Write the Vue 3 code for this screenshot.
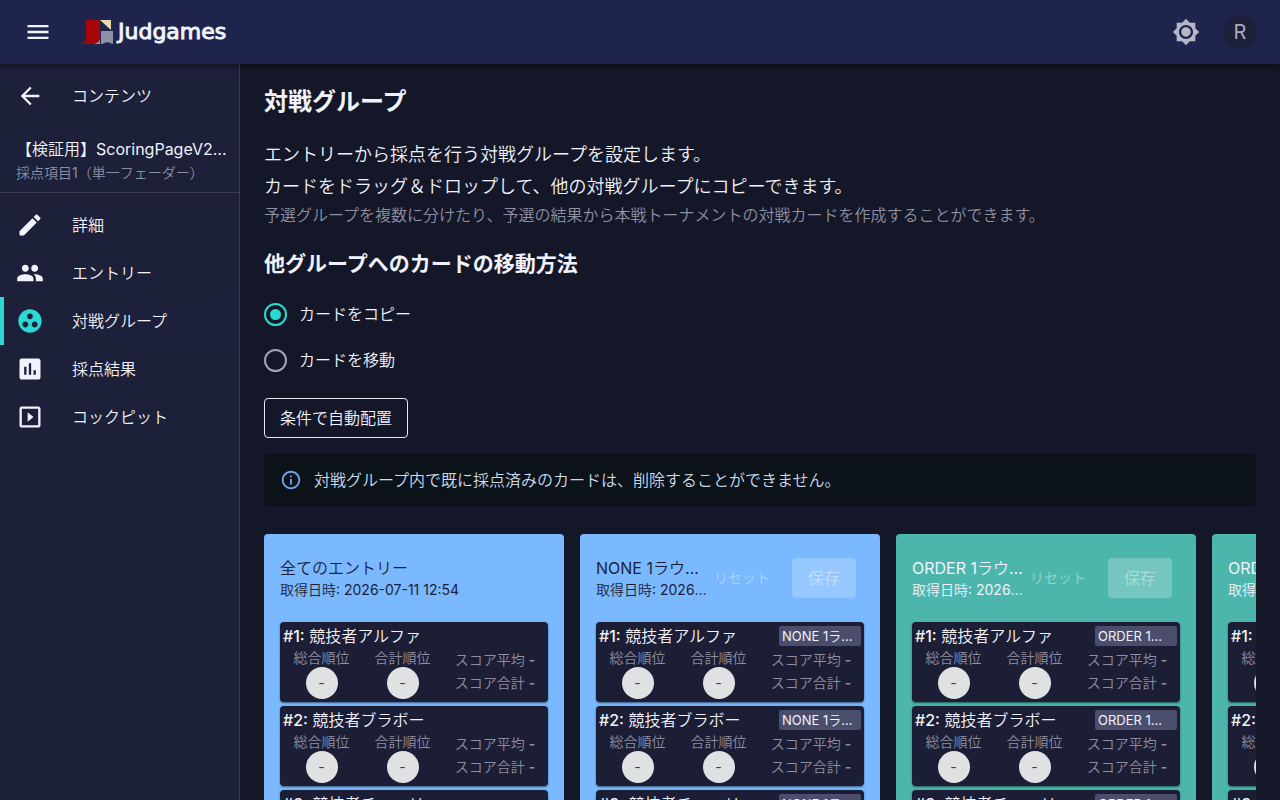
<script setup>
import { ref } from 'vue'

const moveMode = ref('copy')

const navItems = [
  {
    label: '詳細',
    path: 'M3 17.25V21h3.75L17.81 9.94l-3.75-3.75L3 17.25zM20.71 7.04c.39-.39.39-1.02 0-1.41l-2.34-2.34c-.39-.39-1.02-.39-1.41 0l-1.83 1.83 3.75 3.75 1.83-1.83z',
  },
  {
    label: 'エントリー',
    path: 'M16 11c1.66 0 2.99-1.34 2.99-3S17.66 5 16 5c-1.66 0-3 1.34-3 3s1.34 3 3 3zm-8 0c1.66 0 2.99-1.34 2.99-3S9.66 5 8 5C6.34 5 5 6.34 5 8s1.34 3 3 3zm0 2c-2.33 0-7 1.17-7 3.5V19h14v-2.5c0-2.33-4.67-3.5-7-3.5zm8 0c-.29 0-.62.02-.97.05 1.16.84 1.97 1.97 1.97 3.45V19h6v-2.5c0-2.33-4.67-3.5-7-3.5z',
  },
  {
    label: '対戦グループ',
    active: true,
    path: 'M12 2C6.48 2 2 6.48 2 12s4.48 10 10 10 10-4.48 10-10S17.52 2 12 2zM8 17.5c-1.38 0-2.5-1.12-2.5-2.5s1.12-2.5 2.5-2.5 2.5 1.12 2.5 2.5-1.12 2.5-2.5 2.5zM9.5 8c0-1.38 1.12-2.5 2.5-2.5s2.5 1.12 2.5 2.5-1.12 2.5-2.5 2.5S9.5 9.38 9.5 8zm6.5 9.5c-1.38 0-2.5-1.12-2.5-2.5s1.12-2.5 2.5-2.5 2.5 1.12 2.5 2.5-1.12 2.5-2.5 2.5z',
  },
  {
    label: '採点結果',
    path: 'M19 3H5c-1.1 0-2 .9-2 2v14c0 1.1.9 2 2 2h14c1.1 0 2-.9 2-2V5c0-1.1-.9-2-2-2zM9 17H7v-7h2v7zm4 0h-2V7h2v10zm4 0h-2v-4h2v4z',
  },
  {
    label: 'コックピット',
    path: 'M10 8v8l5-4-5-4zm9-5H5c-1.1 0-2 .9-2 2v14c0 1.1.9 2 2 2h14c1.1 0 2-.9 2-2V5c0-1.1-.9-2-2-2zm0 16H5V5h14v14z',
  },
]

const players = ['競技者アルファ', '競技者ブラボー', '競技者チャーリー']

const groups = [
  { name: '全てのエントリー', tone: 'blue', editable: false },
  { name: 'NONE 1ラウンド', tone: 'blue', editable: true },
  { name: 'ORDER 1ラウンド', tone: 'teal', editable: true },
  { name: 'ORDER 2ラウンド', tone: 'teal', editable: true },
]
</script>

<template>
  <div class="app">
    <header class="app-bar">
      <button class="icon-button" type="button" aria-label="メニュー">
        <svg class="icon" viewBox="0 0 24 24"><path d="M3 18h18v-2H3v2zm0-5h18v-2H3v2zm0-7v2h18V6H3z" /></svg>
      </button>
      <a class="brand" href="#">
        <svg class="brand-mark" viewBox="0 0 34 26" aria-hidden="true">
          <path fill="#e8d8b0" d="M20 1h11v10z" />
          <path fill="#8f91a8" d="M21 12h12v13l-6-2-5 2h-1z" />
          <path fill="#8f91a8" d="M20 18v7h-9z" />
          <path fill="#a80508" d="M6 1h14v17c0 4-2 6-6 7H0v-1c4 0 6-1 6-4z" />
        </svg>
        <span class="brand-name">Judgames</span>
      </a>
      <div class="app-bar-actions">
        <button class="icon-button muted" type="button" aria-label="テーマ">
          <svg class="icon" viewBox="0 0 24 24"><path d="M20 8.69V4h-4.69L12 .69 8.69 4H4v4.69L.69 12 4 15.31V20h4.69L12 23.31 15.31 20H20v-4.69L23.31 12 20 8.69zM12 18c-3.31 0-6-2.69-6-6s2.69-6 6-6 6 2.69 6 6-2.69 6-6 6zm0-10c-2.21 0-4 1.79-4 4s1.79 4 4 4 4-1.79 4-4-1.79-4-4-4z" /></svg>
        </button>
        <button class="avatar" type="button">R</button>
      </div>
    </header>

    <div class="body">
      <nav class="sidebar">
        <a class="nav-item back" href="#">
          <svg class="icon" viewBox="0 0 24 24"><path d="M20 11H7.83l5.59-5.59L12 4l-8 8 8 8 1.41-1.41L7.83 13H20v-2z" /></svg>
          <span>コンテンツ</span>
        </a>
        <div class="project">
          <div class="project-name">【検証用】ScoringPageV2 テスト</div>
          <div class="project-item">採点項目1（単一フェーダー）</div>
        </div>
        <ul class="nav-list">
          <li v-for="item in navItems" :key="item.label">
            <a class="nav-item" :class="{ active: item.active }" href="#">
              <svg class="icon" viewBox="0 0 24 24"><path :d="item.path" /></svg>
              <span>{{ item.label }}</span>
            </a>
          </li>
        </ul>
      </nav>

      <main class="content">
        <h1>対戦グループ</h1>
        <p class="lead">エントリーから採点を行う対戦グループを設定します。</p>
        <p class="lead">カードをドラッグ＆ドロップして、他の対戦グループにコピーできます。</p>
        <p class="note">予選グループを複数に分けたり、予選の結果から本戦トーナメントの対戦カードを作成することができます。</p>

        <h2>他グループへのカードの移動方法</h2>
        <div class="radio-group">
          <label class="radio">
            <input v-model="moveMode" type="radio" name="move-mode" value="copy">
            <span>カードをコピー</span>
          </label>
          <label class="radio">
            <input v-model="moveMode" type="radio" name="move-mode" value="move">
            <span>カードを移動</span>
          </label>
        </div>
        <button class="outlined-button" type="button">条件で自動配置</button>

        <div class="alert" role="status">
          <svg class="alert-icon" viewBox="0 0 24 24"><path d="M11 7h2v2h-2zm0 4h2v6h-2zm1-9C6.48 2 2 6.48 2 12s4.48 10 10 10 10-4.48 10-10S17.52 2 12 2zm0 18c-4.41 0-8-3.59-8-8s3.59-8 8-8 8 3.59 8 8-3.59 8-8 8z" /></svg>
          <span>対戦グループ内で既に採点済みのカードは、削除することができません。</span>
        </div>

        <div class="board">
          <section v-for="group in groups" :key="group.name" class="group" :class="group.tone">
            <div class="group-header">
              <div class="group-title">
                <div class="group-name">{{ group.name }}</div>
                <div class="group-date">取得日時: 2026-07-11 12:54</div>
              </div>
              <template v-if="group.editable">
                <button class="reset-button" type="button" disabled>リセット</button>
                <button class="save-button" type="button" disabled>保存</button>
              </template>
            </div>
            <article v-for="(player, index) in players" :key="player" class="card">
              <div class="card-top">
                <div class="card-name"><b>#{{ index + 1 }}:</b> {{ player }}</div>
                <div v-if="group.editable" class="chip">{{ group.name }}</div>
              </div>
              <div class="card-stats">
                <div class="rank">
                  <span>総合順位</span>
                  <span class="rank-value">-</span>
                </div>
                <div class="rank">
                  <span>合計順位</span>
                  <span class="rank-value">-</span>
                </div>
                <div class="scores">
                  <div>スコア平均 <b>-</b></div>
                  <div>スコア合計 <b>-</b></div>
                </div>
              </div>
            </article>
          </section>
        </div>
      </main>
    </div>
  </div>
</template>

<style>
body {
  margin: 0;
  background: #141728;
}
</style>

<style scoped>
.app {
  display: flex;
  flex-direction: column;
  height: 100vh;
  background: #141728;
  color: #f0f2fc;
  font-family: Inter, 'Noto Sans CJK JP DemiLight', 'Noto Sans CJK JP', sans-serif;
  font-size: 16px;
  line-height: 24px;
}

button {
  padding: 0;
  border: 0;
  background: none;
  color: inherit;
  font: inherit;
}

a {
  color: inherit;
  text-decoration: none;
}

b {
  font-weight: 500;
}

.icon {
  display: block;
  flex-shrink: 0;
  width: 28px;
  height: 28px;
  fill: currentColor;
}

.app-bar {
  z-index: 2;
  display: flex;
  flex-shrink: 0;
  align-items: center;
  height: 64px;
  padding: 0 24px;
  background: #1e244b;
  box-shadow: 0 2px 6px rgba(0, 0, 0, 0.5);
}

.brand {
  display: flex;
  align-items: center;
  gap: 4px;
  margin-left: 28px;
}

.brand-mark {
  width: 34px;
  height: 26px;
}

.brand-name {
  font-family: 'DejaVu Sans', sans-serif;
  font-size: 22px;
  -webkit-text-stroke: 1px #f0f2fc;
}

.app-bar-actions {
  display: flex;
  align-items: center;
  gap: 24px;
  margin-left: auto;
}

.muted {
  color: #b5b7c9;
}

.avatar {
  width: 32px;
  height: 32px;
  border-radius: 50%;
  background: #1c2038;
  color: #a9abbd;
  font-size: 20px;
}

.body {
  display: flex;
  flex: 1;
  min-height: 0;
}

.sidebar {
  box-sizing: border-box;
  flex-shrink: 0;
  width: 240px;
  padding-top: 8px;
  border-right: 1px solid #393c52;
  background: #1c2038;
}

.nav-item {
  display: flex;
  align-items: center;
  gap: 28px;
  height: 48px;
  padding: 0 16px;
}

.nav-item.active {
  padding-left: 12px;
  border-left: 4px solid #2bd9d2;
  background: linear-gradient(90deg, #1c2038, #1c203c);
}

.nav-item.active .icon {
  color: #2bd9d2;
}

.project {
  padding: 17px 8px 8px 16px;
  border-bottom: 1px solid #393c52;
}

.project-name {
  overflow: hidden;
  text-overflow: ellipsis;
  white-space: nowrap;
}

.project-item {
  color: #8d8fa3;
  font-size: 14px;
  line-height: 23px;
}

.nav-list {
  margin: 0;
  padding: 8px 0;
  list-style: none;
}

.content {
  flex: 1;
  min-width: 0;
  padding: 21px 24px 0;
  overflow: hidden;
}

h1,
h2 {
  font-family: Inter, 'Noto Sans CJK JP', sans-serif;
  font-weight: 600;
}

h1 {
  margin: 0 0 20px;
  font-size: 24px;
  line-height: 34px;
}

h2 {
  margin: 20px 0 11px;
  font-size: 21px;
  line-height: 32px;
}

.lead {
  margin: 0;
  font-size: 18px;
  line-height: 32px;
}

.note {
  margin: 0;
  color: #8d8fa3;
  line-height: 25px;
}

.radio-group {
  display: flex;
  flex-direction: column;
}

.radio {
  display: flex;
  align-items: center;
  gap: 12px;
  height: 46px;
}

.radio input {
  display: grid;
  place-items: center;
  width: 23px;
  height: 23px;
  margin: 0;
  border: 2px solid #a3a5b7;
  border-radius: 50%;
  appearance: none;
}

.radio input:checked {
  border-color: #2bd9d2;
}

.radio input:checked::before {
  width: 11px;
  height: 11px;
  border-radius: 50%;
  background: #2bd9d2;
  content: '';
}

.outlined-button {
  height: 40px;
  margin-top: 15px;
  padding: 0 15px;
  border: 1px solid #e4e6f0;
  border-radius: 4px;
}

.alert {
  display: flex;
  align-items: center;
  gap: 12px;
  margin: 16px 0 28px;
  padding: 14px 16px;
  border-radius: 4px;
  background: #0b1218;
  color: #cbdcf0;
}

.alert-icon {
  width: 22px;
  height: 22px;
  fill: #6ba6f0;
}

.board {
  display: flex;
  gap: 16px;
  overflow: hidden;
}

.group {
  display: flex;
  box-sizing: border-box;
  flex: 0 0 300px;
  flex-direction: column;
  min-width: 0;
  gap: 4px;
  padding: 16px;
  border-radius: 4px;
}

.group.blue {
  background: #7ab8ff;
  color: #1c1f37;
}

.group.teal {
  background: #4db6ac;
  color: #f0f2fc;
}

.group-header {
  display: flex;
  align-items: center;
  height: 56px;
  padding-right: 8px;
  margin-bottom: 12px;
}

.group-title {
  flex: 1;
  min-width: 0;
}

.group-name,
.group-date,
.chip {
  overflow: hidden;
  text-overflow: ellipsis;
  white-space: nowrap;
}

.group-date {
  font-size: 14px;
  line-height: 20px;
}

.reset-button {
  flex-shrink: 0;
  padding: 0 8px 0 2px;
  font-size: 14px;
}

.save-button {
  flex-shrink: 0;
  width: 64px;
  height: 40px;
  margin-left: 14px;
  border-radius: 4px;
  background: rgba(255, 255, 255, 0.22);
}

.reset-button,
.save-button {
  color: rgba(255, 255, 255, 0.42);
}

.card {
  height: 76px;
  padding: 2px 1px;
  border-radius: 4px;
  background: #1c1e35;
  box-shadow: 0 1px 2px rgba(0, 0, 0, 0.5);
  color: #f0f2fc;
}

.card-top {
  display: flex;
  align-items: center;
  justify-content: space-between;
  height: 24px;
  padding: 0 2px;
}

.card-name {
  white-space: nowrap;
}

.chip {
  box-sizing: border-box;
  width: 82px;
  padding: 0 3px;
  border-radius: 2px;
  background: #4a4e6c;
  font-size: 13px;
  line-height: 20px;
}

.card-stats {
  display: grid;
  grid-template-columns: 81px 81px 1fr;
  color: #8d8fa3;
  font-size: 14px;
}

.rank {
  display: flex;
  align-items: center;
  flex-direction: column;
  line-height: 19px;
}

.rank-value {
  width: 32px;
  height: 32px;
  border-radius: 50%;
  background: #dfe1e3;
  color: #3a3d5c;
  line-height: 32px;
  text-align: center;
}

.scores {
  line-height: 23px;
  text-align: center;
}

.scores b {
  font-weight: 600;
}
</style>
